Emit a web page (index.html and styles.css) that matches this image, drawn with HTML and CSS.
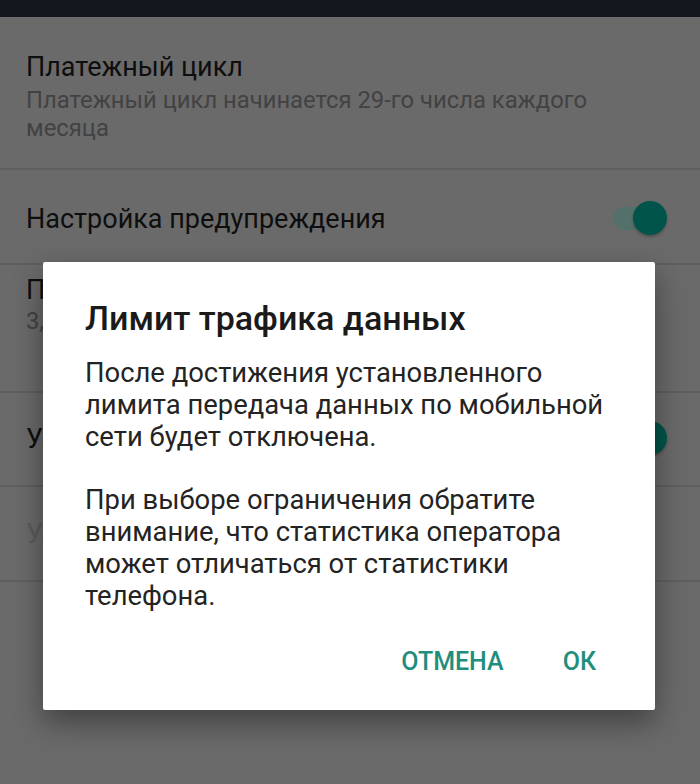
FILE: index.html
```html
<!DOCTYPE html>
<html lang="ru">
<head>
<meta charset="utf-8">
<link rel="stylesheet" href="styles.css">
</head>
<body>
<div class="screen">
  <div class="statusbar"></div>
  <div class="list">
    <div class="row row-1">
      <div class="text">
        <div class="title">Платежный цикл</div>
        <div class="sub">Платежный цикл начинается 29-го числа каждого месяца</div>
      </div>
    </div>
    <div class="row row-2">
      <div class="text"><div class="title">Настройка предупреждения</div></div>
      <div class="toggle"><span class="track"></span><span class="thumb"></span></div>
    </div>
    <div class="row row-3">
      <div class="text">
        <div class="title">Предупреждение</div>
        <div class="sub">3,00 ГБ</div>
      </div>
    </div>
    <div class="row row-4">
      <div class="text"><div class="title">Установить лимит</div></div>
      <div class="toggle"><span class="track"></span><span class="thumb"></span></div>
    </div>
    <div class="row row-5">
      <div class="text"><div class="title disabled">Установить лимит трафика</div></div>
    </div>
  </div>
  <div class="dialog">
    <h1 class="d-title">Лимит трафика данных</h1>
    <p class="d-body">После достижения установленного лимита передача данных по мобильной сети будет отключена.</p>
    <p class="d-body">При выборе ограничения обратите внимание, что статистика оператора может отличаться от статистики телефона.</p>
    <div class="d-actions">
      <span class="btn">ОТМЕНА</span>
      <span class="btn">ОК</span>
    </div>
  </div>
</div>
</body>
</html>
```
FILE: styles.css
```css
* { box-sizing: border-box; }
html, body { margin: 0; padding: 0; }
body {
  width: 700px;
  height: 784px;
  overflow: hidden;
  background: #696969;
  font-family: Roboto, "Noto Sans", sans-serif;
}
.screen {
  position: relative;
  width: 700px;
  height: 784px;
  background: #6a6a6a;
}
.statusbar {
  height: 17px;
  background: #14171e;
}
.list { display: flex; flex-direction: column; }
.row {
  display: flex;
  align-items: center;
  padding: 0 26px;
  border-bottom: 2px solid #5f5f5f;
}
.row-1 { height: 153px; align-items: flex-start; padding-top: 33px; }
.row-2 { height: 95px; padding-top: 4px; }
.row-3 { height: 128px; align-items: flex-start; padding-top: 8px; }
.row-4 { height: 94px; }
.row-5 { height: 95px; }
.text { flex: 1; }
.title {
  font-size: 27px;
  color: #0e0e0e;
  line-height: 34px;
}
.title.disabled { color: #5a5a5a; }
.sub {
  font-size: 23.8px;
  color: #424242;
  line-height: 28px;
  width: 600px;
  margin-top: 2px;
}
.row-3 .sub { margin-top: 0; }
.toggle {
  position: relative;
  width: 56px;
  height: 36px;
  margin-right: 5px;
}
.track {
  position: absolute;
  left: 0;
  top: 6px;
  width: 46px;
  height: 23px;
  border-radius: 12px;
  background: #53706b;
}
.thumb {
  position: absolute;
  left: 20px;
  top: 0;
  width: 34px;
  height: 34px;
  border-radius: 50%;
  background: #00544a;
  box-shadow: 0 2px 3px rgba(0,0,0,0.25);
}
.dialog {
  position: absolute;
  left: 43px;
  top: 262px;
  width: 612px;
  height: 448px;
  background: #ffffff;
  border-radius: 2px;
  box-shadow: 0 12px 30px rgba(0,0,0,0.4);
  padding: 36px 40px 0 42px;
}
.d-title {
  margin: 0 0 19px;
  font-size: 34px;
  font-weight: 500;
  color: #1a1a1a;
  line-height: 40px;
}
.d-body {
  margin: 0 0 31px;
  font-size: 27.4px;
  line-height: 32px;
  color: #232323;
}
.d-actions {
  display: flex;
  justify-content: flex-end;
  gap: 59px;
  margin-top: 34px;
  margin-right: 19px;
}
.btn {
  font-size: 25px;
  font-weight: 500;
  color: #1f8e7d;
  line-height: 32px;
}
```
